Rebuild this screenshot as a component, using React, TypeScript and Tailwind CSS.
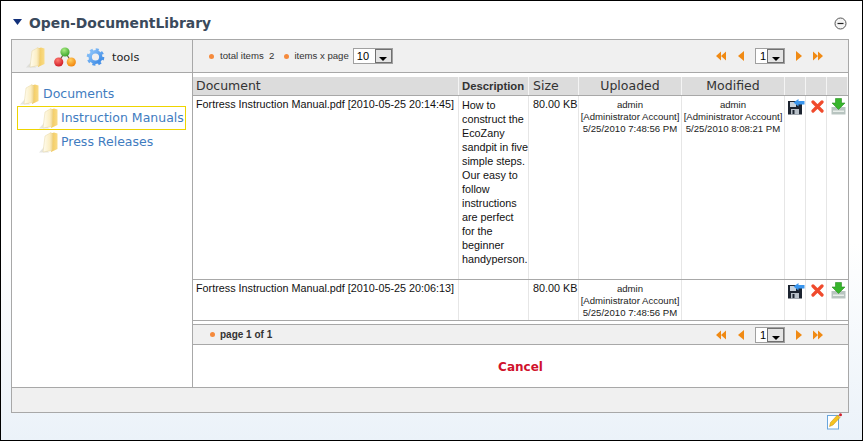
import React from "react";

const Folder = ({ id }: { id: string }) => (
  <svg width="20" height="21" viewBox="0 0 20 21" className="shrink-0">
    <defs>
      <linearGradient id={id} x1="0" y1="0" x2="1" y2="0">
        <stop offset="0" stopColor="#fffdf2" />
        <stop offset="0.7" stopColor="#fbeec4" />
        <stop offset="1" stopColor="#f2d68c" />
      </linearGradient>
      <linearGradient id={`${id}b`} x1="0" y1="0" x2="1" y2="0">
        <stop offset="0" stopColor="#f2c85a" />
        <stop offset="1" stopColor="#f9dc88" />
      </linearGradient>
    </defs>
    <path d="M0 20.5 L5 15 L10 20.5 Z" fill="#cfcfc8" opacity="0.55" />
    <path d="M12 1.5 L15 0.5 L18.5 1.5 L18.5 17 L12 20 Z" fill={`url(#${id}b)`} />
    <path d="M6 4 L12 0.5 L13.5 2 L13 18.5 L4 20 Z" fill={`url(#${id})`} stroke="#e6d6a4" strokeWidth="0.5" />
  </svg>
);

const Molecule = () => (
  <svg width="22" height="20" viewBox="0 0 22 20" className="shrink-0">
    <defs>
      <radialGradient id="mg" cx="0.4" cy="0.3" r="0.8"><stop offset="0" stopColor="#a8ec80" /><stop offset="1" stopColor="#2c9a20" /></radialGradient>
      <radialGradient id="mr" cx="0.4" cy="0.3" r="0.8"><stop offset="0" stopColor="#ff7a70" /><stop offset="1" stopColor="#c80e1c" /></radialGradient>
      <radialGradient id="mo" cx="0.4" cy="0.3" r="0.8"><stop offset="0" stopColor="#ffd060" /><stop offset="1" stopColor="#f07a00" /></radialGradient>
    </defs>
    <path d="M11 5 L4.5 15 M11 5 L17.5 15" stroke="#6a5a40" strokeWidth="1.2" fill="none" />
    <circle cx="11" cy="5" r="4.6" fill="url(#mg)" />
    <circle cx="4.7" cy="15" r="4.6" fill="url(#mr)" />
    <circle cx="17.3" cy="15" r="4.6" fill="url(#mo)" />
  </svg>
);

const Gear = () => (
  <svg width="19" height="18" viewBox="0 0 20 19" className="shrink-0">
    <defs>
      <linearGradient id="gg" x1="0" y1="0" x2="1" y2="1"><stop offset="0" stopColor="#8cc4fa" /><stop offset="1" stopColor="#3a88e4" /></linearGradient>
    </defs>
    <circle cx="10" cy="9.5" r="5.6" fill="none" stroke="url(#gg)" strokeWidth="3.6" />
    <circle cx="10" cy="9.5" r="8" fill="none" stroke="url(#gg)" strokeWidth="2.6" strokeDasharray="3.2 3.08" />
  </svg>
);

const Dot = () => <span className="inline-block w-[5px] h-[5px] rounded-full bg-[#f58a3c] shrink-0" />;

const Tri = ({ left }: { left?: boolean }) => (
  <svg width="6" height="10" viewBox="0 0 6 10">
    <path d={left ? "M6 0 L0 5 L6 10 Z" : "M0 0 L6 5 L0 10 Z"} fill="#f08a14" />
  </svg>
);

const Double = ({ left }: { left?: boolean }) => (
  <svg width="10" height="10" viewBox="0 0 11 10">
    <path d={left ? "M5.5 0 L0 5 L5.5 10 Z M11 0 L5.5 5 L11 10 Z" : "M0 0 L5.5 5 L0 10 Z M5.5 0 L11 5 L5.5 10 Z"} fill="#f08a14" />
  </svg>
);

const Select = ({ value, wide }: { value: string; wide?: boolean }) => (
  <div className={`flex items-stretch h-[16px] bg-white border border-[#a0a0a0] ${wide ? "w-[40px]" : "w-[30px]"}`}>
    <span className={`flex-1 text-[11px] leading-[14px] text-black ${wide ? "pl-[3px]" : "pl-[4px]"}`}>{value}</span>
    <span className="w-[17px] bg-[#e4e4e4] border border-[#707070] flex items-end justify-center pb-[1px]">
      <svg width="8" height="4" viewBox="0 0 8 4"><path d="M0 0 H8 L4 4 Z" fill="#000" /></svg>
    </span>
  </div>
);

const Pager = () => (
  <div className="flex items-center mr-[25px]">
    <Double left />
    <span className="w-[12px]" />
    <Tri left />
    <span className="w-[11px]" />
    <Select value="1" />
    <span className="w-[11px]" />
    <Tri />
    <span className="w-[11px]" />
    <Double />
  </div>
);

const Floppy = () => (
  <svg width="17" height="16" viewBox="0 0 17 16">
    <path d="M0 2 H11 L14 5 V15.5 H0 Z" fill="#1c2430" />
    <rect x="2" y="3" width="6" height="5" fill="#c8d2dc" />
    <rect x="3" y="10" width="8" height="5.5" fill="#b8c0c8" />
    <rect x="4.5" y="11" width="2" height="4" fill="#1c2430" />
    <path d="M5.5 3.5 L10.5 0 V2 H16.5 V5.5 H10.5 V7.5 Z" fill="#3a96ee" />
  </svg>
);

const Cross = () => (
  <svg width="13" height="13" viewBox="0 0 13 13">
    <path d="M2 2 L11 11 M11 2 L2 11" stroke="#f04a2c" strokeWidth="3.2" strokeLinecap="round" />
  </svg>
);

const Download = () => (
  <svg width="15" height="17" viewBox="0 0 15 17">
    <path d="M0.5 9 H14.5 V16.5 H0.5 Z" fill="#b8c4c0" />
    <path d="M2 12.5 H13 V14 H2 Z" fill="#e8eeea" />
    <path d="M4.5 0.5 H10.5 V5 H14 L7.5 11.5 L1 5 H4.5 Z" fill="#37b52c" stroke="#2a8f22" strokeWidth="0.6" />
  </svg>
);

const Pencil = () => (
  <svg width="16" height="17" viewBox="0 0 16 17">
    <rect x="0.5" y="2.5" width="11" height="13.5" fill="#fff" stroke="#6aa6dc" />
    <path d="M2.5 13.5 L3.5 9.5 L10.5 2 L13 4.5 L6 12 Z" fill="#f6c420" stroke="#c08a10" strokeWidth="0.5" />
    <circle cx="13.5" cy="1.8" r="1.5" fill="#d0202c" />
  </svg>
);

const columns = "grid grid-cols-[266px_70px_50px_103px_103px_21px_21px_21px]";
const headBase = "bg-[#dcdcdc] border-r border-[#f4f4f4] flex items-center text-[#333] h-[18px] pt-[1px] leading-none";
const headCell = `${headBase} font-['DejaVu_Sans',sans-serif] text-[12.5px]`;
const bodyCell = "border-r border-[#e6e6e6]";
const auditCell = `${bodyCell} pt-[3px] text-center text-[9.6px] leading-[12px] text-[#222] whitespace-nowrap`;

const Row = ({ name, desc, audit2, height }: { name: string; desc: string[]; audit2: boolean; height: string }) => (
  <div className={`${columns} ${height} border-b border-[#a8a8a8] text-[10.8px] font-['Liberation_Sans',sans-serif]`}>
    <div className={`${bodyCell} pl-[3px] pt-[1px] leading-[14px] text-[#111] whitespace-nowrap`}>{name}</div>
    <div className={`${bodyCell} pl-[3px] pt-[2px] leading-[14px] text-[#111] whitespace-nowrap`}>
      {desc.map((l) => <div key={l}>{l}</div>)}
    </div>
    <div className={`${bodyCell} pl-[4px] pt-[1px] leading-[14px] text-[#111] whitespace-nowrap`}>80.00 KB</div>
    <div className={auditCell}>
      <div>admin</div>
      <div>[Administrator Account]</div>
      <div>5/25/2010 7:48:56 PM</div>
    </div>
    <div className={auditCell}>
      {audit2 && (
        <>
          <div>admin</div>
          <div>[Administrator Account]</div>
          <div>5/25/2010 8:08:21 PM</div>
        </>
      )}
    </div>
    <div className={`${bodyCell} pl-[3px] pt-[3px]`}><Floppy /></div>
    <div className={`${bodyCell} pl-[5px] pt-[4px]`}><Cross /></div>
    <div className="pl-[4px] pt-[2px]"><Download /></div>
  </div>
);

export default function App() {
  return (
    <div className="w-[863px] h-[441px] border border-black bg-gradient-to-b from-white from-55% to-[#ebf2f9] overflow-hidden font-['Liberation_Sans',sans-serif]">
      <div className="flex items-center h-[38px] pt-[7px] pl-[12px] pr-[15px]">
        <svg width="9" height="6" viewBox="0 0 9 6" className="mb-[3px]"><path d="M0 0 H9 L4.5 6 Z" fill="#12307a" /></svg>
        <span className="ml-[7px] font-['DejaVu_Sans',sans-serif] font-bold text-[13.9px] text-[#3a4a5c]">Open-DocumentLibrary</span>
        <svg width="13" height="13" viewBox="0 0 13 13" className="ml-auto">
          <circle cx="6.5" cy="6.5" r="5.5" fill="#f4f4f4" stroke="#555" />
          <path d="M3.5 6.5 H9.5" stroke="#222" strokeWidth="1.2" />
        </svg>
      </div>

      <div className="ml-[10px] w-[838px] border border-[#a8a8a8]">
        <div className="flex h-[33px] border-b border-[#a8a8a8] bg-[#f0f0f0]">
          <div className="w-[181px] border-r border-[#a8a8a8] flex items-center pl-[14px] pt-[2px]">
            <Folder id="f0" />
            <span className="w-[8px]" />
            <Molecule />
            <span className="w-[10px]" />
            <Gear />
            <span className="ml-[7px] pt-[2px] font-['DejaVu_Sans',sans-serif] text-[11.3px] text-[#222]">tools</span>
          </div>
          <div className="flex-1 flex items-center pl-[16px] text-[9.6px] text-[#333]">
            <Dot />
            <span className="ml-[6px]">total items&nbsp; 2</span>
            <span className="w-[10px]" />
            <Dot />
            <span className="ml-[5px]">items x page</span>
            <span className="ml-[4px]"><Select value="10" wide /></span>
            <span className="ml-auto"><Pager /></span>
          </div>
        </div>

        <div className="flex h-[315px] border-b border-[#a8a8a8] bg-white">
          <div className="w-[181px] border-r border-[#a8a8a8] pt-[9px] pl-[5px] font-['DejaVu_Sans',sans-serif] text-[12.5px] text-[#3f7cbf]">
            <div className="flex items-center h-[24px] pl-[3px] gap-[3px]"><Folder id="f1" /><span>Documents</span></div>
            <div className="flex items-center h-[24px] w-[169px] border border-[#eed400] pl-[21px] gap-[2px]"><Folder id="f2" /><span className="whitespace-nowrap">Instruction Manuals</span></div>
            <div className="flex items-center h-[24px] pl-[22px] gap-[2px]"><Folder id="f3" /><span>Press Releases</span></div>
          </div>
          <div className="flex-1 pt-[4px] min-w-0 flex flex-col">
            <div className={`${columns} border-b border-[#a8a8a8]`}>
              <div className={`${headCell} pl-[3px]`}>Document</div>
              <div className={`${headBase} pl-[3px] font-bold text-[11.3px] font-['Liberation_Sans',sans-serif]`}>Description</div>
              <div className={`${headCell} pl-[4px]`}>Size</div>
              <div className={`${headCell} justify-center`}>Uploaded</div>
              <div className={`${headCell} justify-center`}>Modified</div>
              <div className={headCell} />
              <div className={headCell} />
              <div className={headCell} />
            </div>
            <Row
              height="h-[184px]"
              name="Fortress Instruction Manual.pdf [2010-05-25 20:14:45]"
              desc={["How to", "construct the", "EcoZany", "sandpit in five", "simple steps.", "Our easy to", "follow", "instructions", "are perfect", "for the", "beginner", "handyperson."]}
              audit2
            />
            <Row height="h-[41px]" name="Fortress Instruction Manual.pdf [2010-05-25 20:06:13]" desc={[""]} audit2={false} />
            <div className="h-[3px]" />
            <div className="h-[21px] bg-[#f0f0f0] border-y border-[#a8a8a8] flex items-center pl-[17px] text-[10px] font-bold text-[#333]">
              <Dot />
              <span className="ml-[5px]">page 1 of 1</span>
              <span className="ml-auto font-normal"><Pager /></span>
            </div>
            <div className="flex-1 flex items-center justify-center pt-[1px] text-[12px] font-bold text-[#d0122c] font-['DejaVu_Sans',sans-serif]">Cancel</div>
          </div>
        </div>

        <div className="h-[24px] bg-[#f0f0f0]" />
      </div>

      <div className="flex justify-end pr-[19px]"><Pencil /></div>
    </div>
  );
}
